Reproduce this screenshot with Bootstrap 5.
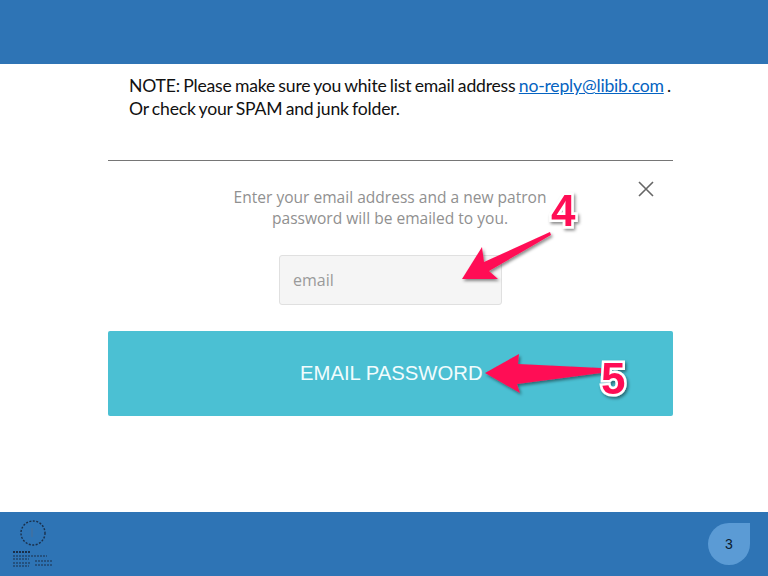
<!DOCTYPE html>
<html lang="en">
<head>
  <meta charset="UTF-8" />
  <meta name="viewport" content="width=device-width, initial-scale=1.0"/>
  <title>Patron password</title>
  <link href="https://cdn.jsdelivr.net/npm/bootstrap@5.3.0/dist/css/bootstrap.min.css" rel="stylesheet"/>
  <style>
    html, body { height: 100%; overflow: hidden; }
    .slide-wrap { height: 576px; position: relative; }
    .band-top { height: 64px; background: #2e74b5; }
    .band-bottom { height: 64px; background: #2e74b5; }
    .slide-body { width: 565px; margin-left: 108px; }
    .note-text { padding: 10px 0 0 21px; height: 96px; font: 17.6px/23px "Lato", sans-serif; letter-spacing: -.2px; word-spacing: -1px; color: #111; }
    .note-text a { color: #0563c1; }
    .rule-line { height: 1px; background: #767676; margin: 0; opacity: 1; border: 0; }
    .form-area { height: 170px; position: relative; }
    .prompt-text { width: 340px; margin-left: 112px; padding-top: 26px; height: 94px; text-align: center; font: 15.55px/21px "Open Sans", sans-serif; color: #909090; }
    .email-box { width: 223px; height: 50px; margin-left: 171px; background: #f5f5f5; border: 1px solid #e0e0e0; border-radius: 3px; padding-left: 13px; font: 16px "Open Sans", sans-serif; }
    .email-box::placeholder { color: #9a9a9a; opacity: 1; }
    .close-x { position: absolute; top: 19px; right: 18px; width: 18px; height: 18px; line-height: 0; background: none; }
    .send-btn { height: 85px; width: 100%; background: #4bc0d3; border: 0; border-radius: 2px; color: #f2fcfd; font: 20.3px "Liberation Sans", sans-serif; padding: 0 0 0 192px; text-align: left; }
    .callouts { position: absolute; left: 0; top: 0; pointer-events: none; }
    .callout-num { font: 700 44px "Liberation Sans", sans-serif; fill: #ff1055; stroke: #fff; stroke-width: 5px; paint-order: stroke; }
    .page-tag { width: 42px; height: 42px; background: #5b9bd5; border-radius: 50% 0 50% 50%; color: #0c1c2e; font: 14px "Liberation Sans", sans-serif; margin: 11px 18px 0 0; }
    .logo-box { margin: 7px 0 0 11px; }
  </style>
</head>
<body>
  <div class="slide-wrap d-flex flex-column bg-white">
    <div class="band-top"></div>

    <div class="slide-body flex-grow-1">
      <div class="note-text">
        NOTE: Please make sure you white list email address <a href="#">no-reply@libib.com</a> .<br>
        Or check your SPAM and junk folder.
      </div>
      <hr class="rule-line">
      <form class="form-area">
        <button type="button" class="close-x btn p-0 border-0" aria-label="Close">
          <svg width="18" height="18" viewBox="0 0 18 18"><path d="M2 2L16 16M16 2L2 16" stroke="#666" stroke-width="1.6" fill="none"/></svg>
        </button>
        <div class="prompt-text">Enter your email address and a new patron password will be emailed to you.</div>
        <input type="email" class="email-box form-control shadow-none" placeholder="email">
      </form>
      <button type="button" class="send-btn btn d-block">EMAIL PASSWORD</button>
    </div>

    <div class="band-bottom d-flex justify-content-between align-items-start">
      <div class="logo-box">
        <svg width="44" height="50" viewBox="0 0 44 50">
          <circle cx="22" cy="14" r="12" fill="none" stroke="#1a2f4a" stroke-width="1.4" stroke-dasharray="2 1.5"/>
          <path d="M21 9v9" stroke="#4a6f96" stroke-width="1" fill="none"/>
          <path d="M2 33h18" stroke="#1a2f4a" stroke-width="2" stroke-dasharray="2 1"/>
          <path d="M2 37h34M2 40h16" stroke="#1a2f4a" stroke-width="1.2" stroke-dasharray="2 1"/>
          <path d="M2 44h17M24 42h18M24 46h17M2 47h16" stroke="#1a2f4a" stroke-width="1.2" stroke-dasharray="2 1"/>
        </svg>
      </div>
      <div class="page-tag d-flex align-items-center justify-content-center">3</div>
    </div>

    <!-- arrows and numbers drawn over the screenshot -->
    <svg class="callouts" width="768" height="576" viewBox="0 0 768 576">
      <defs>
        <filter id="dropShade" x="-20%" y="-20%" width="150%" height="150%">
          <feDropShadow dx="1.5" dy="2" stdDeviation="1.5" flood-color="#000" flood-opacity=".45"/>
        </filter>
      </defs>
      <g filter="url(#dropShade)">
        <path d="M550 232L484 262L482 247L462 279L498 279L489 271L551 235Z" fill="#ff1055"/>
        <text class="callout-num" x="551" y="226">4</text>
        <path d="M601 368L518 364L519 354L485 373L520 393L517 384L601 373Z" fill="#ff1055"/>
        <text class="callout-num" x="601" y="394">5</text>
      </g>
    </svg>
  </div>

  <script src="https://cdn.jsdelivr.net/npm/bootstrap@5.3.0/dist/js/bootstrap.bundle.min.js"></script>
</body>
</html>
